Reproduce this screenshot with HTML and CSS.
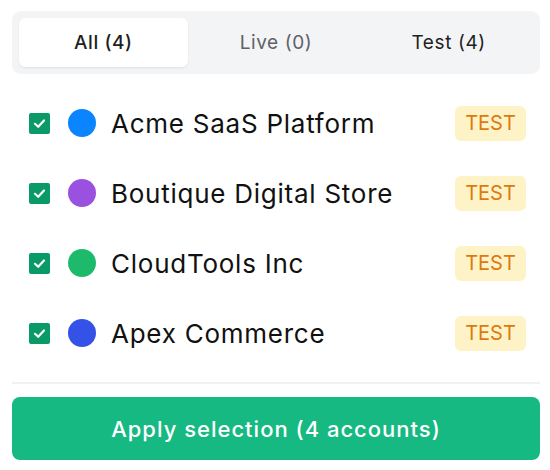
FILE: index.html
```html
<!DOCTYPE html>
<html>
<head>
<meta charset="utf-8">
<link rel="stylesheet" href="styles.css">
</head>
<body>
<div class="panel">
  <div class="tabs">
    <div class="tab active">All (4)</div>
    <div class="tab muted">Live (0)</div>
    <div class="tab">Test (4)</div>
  </div>
  <div class="list">
    <div class="row">
      <span class="check"><svg viewBox="0 0 21 21" width="21" height="21"><polyline points="6,10.8 9.2,13.8 15,7.5" fill="none" stroke="#fff" stroke-width="2.2" stroke-linecap="round" stroke-linejoin="round"/></svg></span>
      <span class="dot blue"></span>
      <span class="name">Acme SaaS Platform</span>
      <span class="badge">TEST</span>
    </div>
    <div class="row">
      <span class="check"><svg viewBox="0 0 21 21" width="21" height="21"><polyline points="6,10.8 9.2,13.8 15,7.5" fill="none" stroke="#fff" stroke-width="2.2" stroke-linecap="round" stroke-linejoin="round"/></svg></span>
      <span class="dot purple"></span>
      <span class="name">Boutique Digital Store</span>
      <span class="badge">TEST</span>
    </div>
    <div class="row">
      <span class="check"><svg viewBox="0 0 21 21" width="21" height="21"><polyline points="6,10.8 9.2,13.8 15,7.5" fill="none" stroke="#fff" stroke-width="2.2" stroke-linecap="round" stroke-linejoin="round"/></svg></span>
      <span class="dot green"></span>
      <span class="name">CloudTools Inc</span>
      <span class="badge">TEST</span>
    </div>
    <div class="row">
      <span class="check"><svg viewBox="0 0 21 21" width="21" height="21"><polyline points="6,10.8 9.2,13.8 15,7.5" fill="none" stroke="#fff" stroke-width="2.2" stroke-linecap="round" stroke-linejoin="round"/></svg></span>
      <span class="dot indigo"></span>
      <span class="name">Apex Commerce</span>
      <span class="badge">TEST</span>
    </div>
  </div>
  <div class="divider"></div>
  <button class="apply">Apply selection (4 accounts)</button>
</div>
</body>
</html>
```

FILE: styles.css
```css
html, body {
  margin: 0;
  padding: 0;
  background: #fff;
}
body {
  font-family: Inter, "Noto Sans", sans-serif;
  color: #111;
}
.panel {
  padding: 11px 10px 0 12px;
  display: flex;
  flex-direction: column;
}
.tabs {
  background: #f3f4f6;
  border-radius: 9px;
  padding: 7px;
  display: flex;
  gap: 4px;
  height: 49px;
}
.tab {
  flex: 1;
  display: flex;
  align-items: center;
  justify-content: center;
  font-size: 19px;
  letter-spacing: 0.6px;
  color: #1f1f1f;
  border-radius: 6px;
}
.tab.active {
  background: #fff;
  font-weight: 500;
  box-shadow: 0 1px 2px rgba(0,0,0,0.08);
}
.tab.muted {
  color: #5f6168;
}
.list {
  margin-top: 14px;
  padding-bottom: 14px;
  display: flex;
  flex-direction: column;
}
.row {
  height: 70px;
  display: flex;
  align-items: center;
  padding: 0 14px 0 17px;
}
.check {
  width: 21px;
  height: 21px;
  background: #0a9a68;
  border-radius: 2px;
  display: flex;
  flex: none;
}
.dot {
  width: 28px;
  height: 28px;
  border-radius: 50%;
  margin-left: 18px;
  flex: none;
}
.blue { background: #0a84ff; }
.purple { background: #9b51e0; }
.green { background: #1dba6b; }
.indigo { background: #3452e8; }
.name {
  margin-left: 15px;
  font-size: 26px;
  letter-spacing: 0.75px;
  flex: 1;
  color: #111;
}
.badge {
  width: 71px;
  height: 35px;
  border-radius: 6px;
  background: #fef3c7;
  color: #dc7a0e;
  font-size: 20px;
  display: flex;
  align-items: center;
  justify-content: center;
}
.divider {
  height: 2px;
  background: #f1f1f2;
}
.apply {
  margin-top: 13px;
  height: 63px;
  border: none;
  border-radius: 8px;
  background: #15b981;
  color: #fff;
  font-family: Inter, "Noto Sans", sans-serif;
  font-size: 22px;
  letter-spacing: 1px;
  font-weight: 500;
  padding: 0;
}
```
